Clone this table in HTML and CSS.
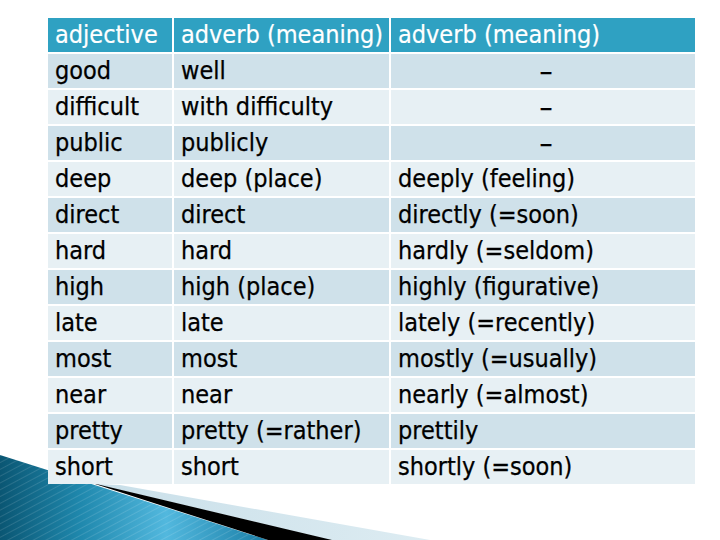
FILE: index.html
```html
<!DOCTYPE html>
<html>
<head>
<meta charset="utf-8">
<link rel="stylesheet" href="styles.css">
</head>
<body>
<svg class="deco" width="720" height="90" viewBox="0 450 720 90" xmlns="http://www.w3.org/2000/svg">
  <defs>
    <linearGradient id="blue" x1="0" y1="0" x2="1" y2="0" gradientUnits="objectBoundingBox">
      <stop offset="0" stop-color="#0a5673"/>
      <stop offset="0.3" stop-color="#1f88ad"/>
      <stop offset="0.62" stop-color="#52b8de"/>
      <stop offset="1" stop-color="#1a7ea6"/>
    </linearGradient>
    <linearGradient id="pale" x1="0" y1="0" x2="1" y2="0">
      <stop offset="0" stop-color="#c9dfe9"/>
      <stop offset="1" stop-color="#ddecf2"/>
    </linearGradient>
    <pattern id="stripes" width="6" height="6" patternUnits="userSpaceOnUse" patternTransform="rotate(62)">
      <rect width="1" height="6" fill="#ffffff" fill-opacity="0.12"/>
    </pattern>
  </defs>
  <polygon points="120,485 430,540 330,540 95,484" fill="url(#pale)"/>
  <polygon points="0,455 268,540 0,540" fill="url(#blue)"/>
  <polygon points="0,455 268,540 0,540" fill="url(#stripes)"/>
  <polygon points="92,483 332,540 268,540" fill="#000"/>
</svg>
<div class="table">
  <div class="cell head">adjective</div><div class="cell head">adverb (meaning)</div><div class="cell head">adverb (meaning)</div>

  <div class="cell d">good</div><div class="cell d">well</div><div class="cell d dash">–</div>
  <div class="cell l">difficult</div><div class="cell l">with difficulty</div><div class="cell l dash">–</div>
  <div class="cell d">public</div><div class="cell d">publicly</div><div class="cell d dash">–</div>
  <div class="cell l">deep</div><div class="cell l">deep (place)</div><div class="cell l">deeply (feeling)</div>
  <div class="cell d">direct</div><div class="cell d">direct</div><div class="cell d">directly (=soon)</div>
  <div class="cell l">hard</div><div class="cell l">hard</div><div class="cell l">hardly (=seldom)</div>
  <div class="cell d">high</div><div class="cell d">high (place)</div><div class="cell d">highly (figurative)</div>
  <div class="cell l">late</div><div class="cell l">late</div><div class="cell l">lately (=recently)</div>
  <div class="cell d">most</div><div class="cell d">most</div><div class="cell d">mostly (=usually)</div>
  <div class="cell l">near</div><div class="cell l">near</div><div class="cell l">nearly (=almost)</div>
  <div class="cell d">pretty</div><div class="cell d">pretty (=rather)</div><div class="cell d">prettily</div>
  <div class="cell l">short</div><div class="cell l">short</div><div class="cell l">shortly (=soon)</div>
</div>
</body>
</html>
```
FILE: styles.css
```css
html, body {
  margin: 0;
  padding: 0;
  background: #ffffff;
}
body {
  width: 720px;
  height: 540px;
  overflow: hidden;
  position: relative;
  font-family: "DejaVu Sans Condensed", "DejaVu Sans", sans-serif;
  font-stretch: condensed;
}
.deco {
  position: absolute;
  left: 0;
  bottom: 0;
  z-index: 0;
}
.table {
  position: relative;
  z-index: 1;
  margin: 18px 0 0 48px;
  width: 647px;
  display: grid;
  grid-template-columns: 124px 215px 304px;
  grid-auto-rows: 34px;
  gap: 2px;
  background: #ffffff;
}
.cell {
  padding-left: 7px;
  font-size: 25px;
  line-height: 34px;
  color: #000;
  white-space: nowrap;
  overflow: hidden;
  -webkit-text-stroke: 0.25px #000;
}
.head {
  background: #2fa1c2;
  color: #ffffff;
  -webkit-text-stroke: 0.2px #ffffff;
}
.d {
  background: #cfe1ea;
}
.l {
  background: #e7f0f4;
}
.dash {
  text-align: center;
  padding-left: 6px;
  font-size: 29px;
}
```
